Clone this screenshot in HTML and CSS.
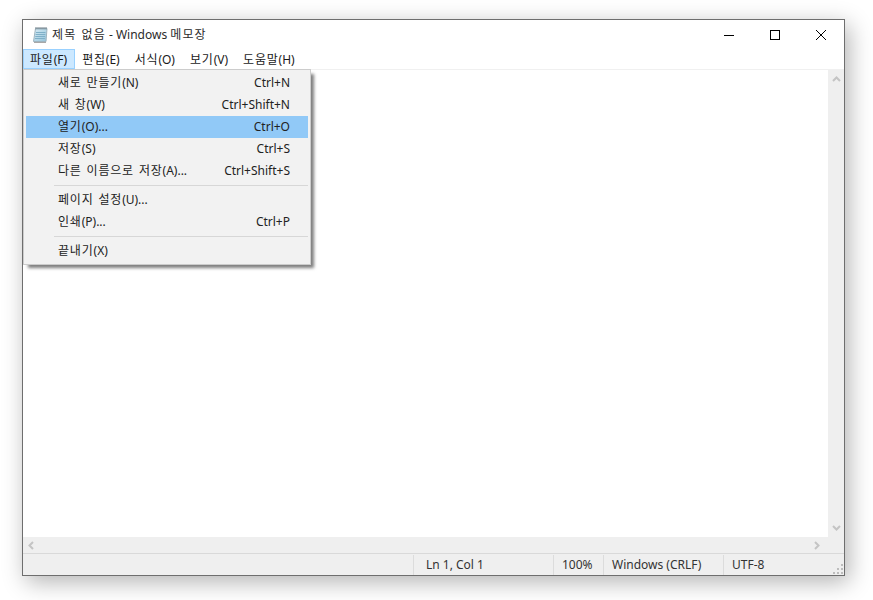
FILE: index.html
```html
<!DOCTYPE html>
<html lang="ko">
<head>
  <meta charset="UTF-8">
  <title>제목 없음 - Windows 메모장</title>
  <link rel="stylesheet" href="styles.css">
</head>
<body>
  <div class="window">
    <div class="titlebar">
      <svg class="app-icon" width="18" height="18" viewBox="0 0 18 18">
        <defs>
          <linearGradient id="pad" x1="0" y1="0" x2="1" y2="1">
            <stop offset="0" stop-color="#d8ecf5"/>
            <stop offset="1" stop-color="#93c3da"/>
          </linearGradient>
        </defs>
        <path d="M4.5 2.5 L16 2.5 L15 15.5 L2.5 15.5 Z" fill="url(#pad)" stroke="#9fb4bf" stroke-width="1"/>
        <path d="M5 1 V3.5 M7 1 V3.5 M9 1 V3.5 M11 1 V3.5 M13 1 V3.5 M15 1 V3.5" stroke="#6f7f88" stroke-width="1"/>
        <path d="M5 6.5 H14.5 M4.6 8.5 H14.3 M4.3 10.5 H14.1 M4 12.5 H13.9" stroke="#7fb0c8" stroke-width="1"/>
        <path d="M3 16.5 H15" stroke="#a8a8a8" stroke-width="1"/>
      </svg>
      <span class="title-text"><span class="ko-title">제목 없음</span> - Windows <span class="ko-title">메모장</span></span>
      <div class="controls">
        <div class="ctl">
          <svg width="10" height="10" viewBox="0 0 10 10"><path d="M0 5.5 H10" stroke="#000" stroke-width="1"/></svg>
        </div>
        <div class="ctl">
          <svg width="10" height="10" viewBox="0 0 10 10"><rect x="0.5" y="0.5" width="9" height="9" fill="none" stroke="#000" stroke-width="1"/></svg>
        </div>
        <div class="ctl">
          <svg width="10" height="10" viewBox="0 0 10 10"><path d="M0 0 L10 10 M10 0 L0 10" stroke="#000" stroke-width="1"/></svg>
        </div>
      </div>
    </div>

    <div class="menubar">
      <span class="menu-top active"><span class="ko">파일</span>(F)</span>
      <span class="menu-top"><span class="ko">편집</span>(E)</span>
      <span class="menu-top"><span class="ko">서식</span>(O)</span>
      <span class="menu-top"><span class="ko">보기</span>(V)</span>
      <span class="menu-top"><span class="ko">도움말</span>(H)</span>
    </div>

    <div class="editor-row">
      <div class="editor"></div>
      <div class="vscroll">
        <svg width="9" height="6" viewBox="0 0 9 6"><path d="M1 5 L4.5 1.5 L8 5" fill="none" stroke="#c4c4c4" stroke-width="2"/></svg>
        <svg width="9" height="6" viewBox="0 0 9 6"><path d="M1 1 L4.5 4.5 L8 1" fill="none" stroke="#c4c4c4" stroke-width="2"/></svg>
      </div>
    </div>

    <div class="hscroll">
      <svg width="6" height="9" viewBox="0 0 6 9"><path d="M5 1 L1.5 4.5 L5 8" fill="none" stroke="#c4c4c4" stroke-width="2"/></svg>
      <svg width="6" height="9" viewBox="0 0 6 9"><path d="M1 1 L4.5 4.5 L1 8" fill="none" stroke="#c4c4c4" stroke-width="2"/></svg>
    </div>

    <div class="statusbar">
      <div class="st-fill"></div>
      <div class="st st-pos">Ln 1, Col 1</div>
      <div class="st st-zoom">100%</div>
      <div class="st st-eol">Windows (CRLF)</div>
      <div class="st st-enc">UTF-8</div>
      <svg class="grip" width="11" height="11" viewBox="0 0 11 11" fill="#bdbdbd">
        <rect x="8" y="0" width="2" height="2"/>
        <rect x="4" y="4" width="2" height="2"/><rect x="8" y="4" width="2" height="2"/>
        <rect x="0" y="8" width="2" height="2"/><rect x="4" y="8" width="2" height="2"/><rect x="8" y="8" width="2" height="2"/>
      </svg>
    </div>

    <div class="dropdown">
      <div class="item"><span><span class="ko">새로 만들기</span>(N)</span><span>Ctrl+N</span></div>
      <div class="item"><span><span class="ko">새 창</span>(W)</span><span>Ctrl+Shift+N</span></div>
      <div class="item selected"><span><span class="ko">열기</span>(O)...</span><span>Ctrl+O</span></div>
      <div class="item"><span><span class="ko">저장</span>(S)</span><span>Ctrl+S</span></div>
      <div class="item"><span><span class="ko">다른 이름으로 저장</span>(A)...</span><span>Ctrl+Shift+S</span></div>
      <div class="sep"></div>
      <div class="item"><span><span class="ko">페이지 설정</span>(U)...</span></div>
      <div class="item"><span><span class="ko">인쇄</span>(P)...</span><span>Ctrl+P</span></div>
      <div class="sep"></div>
      <div class="item"><span><span class="ko">끝내기</span>(X)</span></div>
    </div>
  </div>
</body>
</html>
```

FILE: styles.css
```css
html, body { margin: 0; height: 100%; background: #fff; }
body { padding: 19px 0 0 22px; box-sizing: border-box; overflow: hidden; font-family: "Noto Sans", "Noto Sans CJK KR", sans-serif; font-size: 12px; color: #1a1a1a; }

.ko { letter-spacing: 0.8px; word-spacing: 1px; }
.ko-title { letter-spacing: 1.1px; word-spacing: 1px; }

.window { position: relative; width: 823px; height: 557px; box-sizing: border-box; border: 1px solid #6e6e6e; background: #fff; display: flex; flex-direction: column; box-shadow: 4px 6px 22px rgba(0, 0, 0, 0.3); }

.titlebar { height: 29px; display: flex; align-items: center; padding-left: 8px; flex: none; }
.app-icon { margin-right: 3px; }
.title-text { color: #2b2b2b; margin-top: -2px; }
.controls { margin-left: auto; display: flex; height: 100%; }
.ctl { width: 46px; display: flex; align-items: center; justify-content: center; }

.menubar { height: 20px; display: flex; flex: none; border-bottom: 1px solid #f0f0f0; }
.menu-top { padding: 0 7px 0 6px; height: 20px; box-sizing: border-box; border: 1px solid transparent; line-height: 19px; }
.menu-top.active { background: #cce8ff; border-color: #99d1ff; }

.editor-row { flex: 1; display: flex; min-height: 0; }
.editor { flex: 1; background: #fff; }
.vscroll { width: 16px; background: #efefef; display: flex; flex-direction: column; justify-content: space-between; align-items: center; padding: 6px 0; box-sizing: border-box; }

.hscroll { height: 16px; flex: none; background: #efefef; display: flex; justify-content: space-between; align-items: center; padding: 0 24px 0 5px; }

.statusbar { position: relative; height: 22px; flex: none; background: #efefef; border-top: 1px solid #d9d9d9; display: flex; box-sizing: border-box; line-height: 20px; color: #333; }
.st-fill { width: 390px; }
.st { border-left: 1px solid #dcdcdc; margin-top: 1px; }
.st-pos { width: 140px; padding-left: 12px; box-sizing: border-box; }
.st-zoom { width: 50px; padding-left: 8px; box-sizing: border-box; }
.st-eol { width: 120px; padding-left: 8px; box-sizing: border-box; }
.st-enc { flex: 1; padding-left: 8px; }
.grip { position: absolute; right: 0; bottom: 0; }

.dropdown { position: absolute; left: 0; top: 49px; width: 288px; box-sizing: border-box; padding: 2px; background: #f2f2f2; border: 1px solid #cccccc; box-shadow: 4px 4px 3px -1px rgba(0, 0, 0, 0.5); z-index: 5; }
.item { height: 22px; line-height: 22px; display: flex; justify-content: space-between; padding: 0 18px 0 32px; color: #222; }
.item.selected { background: #91c9f7; }
.sep { height: 1px; background: #d7d7d7; margin: 3px 0 3px 28px; }
```
